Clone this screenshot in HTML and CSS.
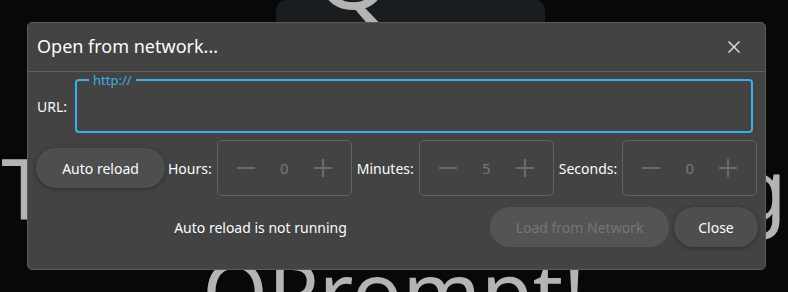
FILE: index.html
```html
<!DOCTYPE html>
<html lang="en">
<head>
  <meta charset="UTF-8">
  <meta name="viewport" content="width=device-width, initial-scale=1.0">
  <title>QPrompt</title>
  <link rel="stylesheet" href="styles.css">
</head>
<body>
  <div class="stage">
    <div class="backdrop">
      <div class="logo"><span class="logo-q">Q</span></div>
      <p class="prompt-line">Thank you for using</p>
      <p class="prompt-line">QPrompt!</p>
    </div>

    <div class="dialog">
      <div class="dialog-header">
        <h1>Open from network...</h1>
        <button class="icon-btn" aria-label="Close">
          <svg viewBox="0 0 12 12"><path d="M0.5 0.5L11.5 11.5M11.5 0.5L0.5 11.5"/></svg>
        </button>
      </div>

      <div class="dialog-body">
        <div class="url-row">
          <label for="url">URL:</label>
          <div class="text-field">
            <span class="floating-label">http://</span>
            <input id="url" type="text">
          </div>
        </div>

        <div class="timer-row">
          <button class="btn btn-reload">Auto reload</button>
          <span class="field-label">Hours:</span>
          <div class="spinbox">
            <svg viewBox="0 0 18 18"><path d="M0 9H18"/></svg>
            <span class="spin-value">0</span>
            <svg viewBox="0 0 18 18"><path d="M0 9H18M9 0V18"/></svg>
          </div>
          <span class="field-label">Minutes:</span>
          <div class="spinbox">
            <svg viewBox="0 0 18 18"><path d="M0 9H18"/></svg>
            <span class="spin-value">5</span>
            <svg viewBox="0 0 18 18"><path d="M0 9H18M9 0V18"/></svg>
          </div>
          <span class="field-label">Seconds:</span>
          <div class="spinbox">
            <svg viewBox="0 0 18 18"><path d="M0 9H18"/></svg>
            <span class="spin-value">0</span>
            <svg viewBox="0 0 18 18"><path d="M0 9H18M9 0V18"/></svg>
          </div>
        </div>

        <div class="footer-row">
          <p class="status">Auto reload is not running</p>
          <button class="btn btn-load" disabled>Load from Network</button>
          <button class="btn btn-close">Close</button>
        </div>
      </div>
    </div>
  </div>
</body>
</html>
```

FILE: styles.css
```css
:root {
  --page-bg: #080808;
  --dialog-bg: #434343;
  --dialog-border: #5a5a5a;
  --line: #606060;
  --text: #fcfcfc;
  --muted: #767676;
  --accent: #3daee9;
  --prompt-text: #b4b4b4;
}

* {
  box-sizing: border-box;
  margin: 0;
  padding: 0;
}

body {
  font-family: 'Noto Sans', 'Open Sans', sans-serif;
  background-color: var(--page-bg);
  color: var(--text);
  overflow: hidden;
}

.stage {
  position: relative;
  width: 788px;
  height: 292px;
  overflow: hidden;
}

/* teleprompter text behind the dialog */
.backdrop {
  display: flex;
  flex-direction: column;
  align-items: center;
  color: var(--prompt-text);
  font-size: 84px;
  line-height: 103px;
}

.logo {
  align-self: flex-start;
  margin-left: 276px;
  width: 269px;
  height: 136px;
  background-color: #1a1d20;
  border-radius: 10px;
  overflow: hidden;
}

.logo-q {
  display: block;
  font-size: 100px;
  line-height: 100px;
  margin-top: -80px;
  padding-left: 38px;
}

.prompt-line {
  white-space: nowrap;
}

/* dialog */
.dialog {
  position: absolute;
  top: 22px;
  left: 27px;
  width: 739px;
  height: 248px;
  background-color: var(--dialog-bg);
  border: 1px solid var(--dialog-border);
  border-radius: 5px;
  display: flex;
  flex-direction: column;
}

.dialog-header {
  height: 49px;
  display: flex;
  align-items: center;
  justify-content: space-between;
  padding: 0 19px 0 9px;
  border-bottom: 1px solid var(--line);
}

.dialog-header h1 {
  font-size: 18px;
  font-weight: normal;
  margin-top: -2px;
}

.icon-btn {
  width: 24px;
  height: 24px;
  background: none;
  border: none;
  display: flex;
  align-items: center;
  justify-content: center;
}

.icon-btn svg {
  width: 12px;
  height: 12px;
  stroke: #e6e6e6;
  stroke-width: 1.4;
  fill: none;
}

.dialog-body {
  padding: 7px 7px 0 8px;
  display: flex;
  flex-direction: column;
  font-size: 14px;
}

.url-row {
  display: flex;
  align-items: center;
  gap: 8px;
  padding-left: 1px;
  margin-right: 5px;
}

.text-field {
  position: relative;
  flex: 1;
  height: 54px;
  border: 2px solid var(--accent);
  border-radius: 4px;
}

.floating-label {
  position: absolute;
  top: -9px;
  left: 12px;
  padding: 0 4px;
  background-color: var(--dialog-bg);
  color: var(--accent);
  font-size: 13px;
  line-height: 16px;
}

.text-field input {
  width: 100%;
  height: 100%;
  background: none;
  border: none;
  outline: none;
  color: var(--text);
  font: inherit;
  padding: 0 14px;
}

.timer-row {
  display: flex;
  align-items: center;
  margin-top: 7px;
  height: 56px;
}

.btn {
  height: 40px;
  border: none;
  border-radius: 20px;
  font-family: inherit;
  font-size: 14px;
  color: var(--text);
  background-color: #4e4e4e;
  box-shadow: 0 1px 4px rgba(0, 0, 0, 0.35);
}

.btn-reload {
  width: 129px;
  margin-right: 3px;
}

.field-label {
  margin-right: 5px;
}

.spinbox {
  width: 135px;
  height: 56px;
  margin-right: 5px;
  border: 1px solid #626262;
  border-radius: 5px;
  display: grid;
  grid-template-columns: 56px 1fr 56px;
  align-items: center;
  justify-items: center;
}

.spinbox:last-child {
  margin-right: 0;
}

.spinbox svg {
  width: 18px;
  height: 18px;
  stroke: #6a6a6a;
  stroke-width: 2;
  fill: none;
}

.spin-value {
  color: #737a7e;
  font-size: 15px;
}

.footer-row {
  display: flex;
  align-items: center;
  gap: 5px;
  margin-top: 11px;
}

.status {
  flex: 1;
  text-align: center;
}

.btn-load {
  width: 179px;
  background-color: #545454;
  color: var(--muted);
  box-shadow: none;
}

.btn-close {
  width: 84px;
}
```
